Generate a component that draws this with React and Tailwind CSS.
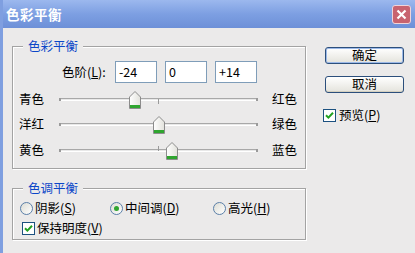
import React from 'react';

const font = { fontFamily: '"Noto Sans CJK SC", "Liberation Sans", sans-serif' };

const Key = ({ children }) => <span className="underline underline-offset-1">{children}</span>;

const Thumb = () => (
  <svg width="12" height="18" viewBox="0 0 12 18" className="block">
    <defs>
      <linearGradient id="tg" x1="0" y1="0" x2="1" y2="0">
        <stop offset="0" stopColor="#ffffff" />
        <stop offset="1" stopColor="#e2e2dc" />
      </linearGradient>
    </defs>
    <path d="M0.5 6 L6 0.5 L11.5 6 L11.5 17.5 L0.5 17.5 Z" fill="url(#tg)" stroke="#8c8c8c" />
    <rect x="1" y="14" width="10" height="3" fill="#2fa52f" />
  </svg>
);

const SliderRow = ({ left, right, value, tickUp }) => {
  const pct = 50 + value / 2;
  return (
    <div className="flex items-center h-[25px]">
      <span className="w-[47px] pl-[7px]">{left}</span>
      <div className="relative w-[199px] h-[20px]">
        <div className="absolute left-0 right-0 top-[8px] h-[3px] border-t border-[#a8a8a8] border-b border-b-white bg-[#e8e8e8]" />
        <div className="absolute left-0 top-[8px] w-[2px] h-[3px] bg-[#9a9a9a]" />
        <div className="absolute right-0 top-[8px] w-[2px] h-[3px] bg-[#9a9a9a]" />
        <div className={`absolute left-[99px] w-px h-[5px] bg-[#9a9a9a] ${tickUp ? 'top-[5px]' : 'top-[9px]'}`} />
        <div className="absolute top-[1px] -translate-x-1/2" style={{ left: `${pct}%` }}>
          <Thumb />
        </div>
      </div>
      <span className="ml-[14px]">{right}</span>
    </div>
  );
};

const Check = () => (
  <span className="w-[13px] h-[13px] border border-[#1c5180] bg-white flex items-center justify-center">
    <svg width="9" height="9" viewBox="0 0 9 9">
      <path d="M1 4.2 L3.4 6.6 L8 1.8" fill="none" stroke="#21a121" strokeWidth="2" />
    </svg>
  </span>
);

const Radio = ({ on }) => (
  <span className="w-[13px] h-[13px] rounded-full border border-[#5a7fa8] bg-gradient-to-br from-[#dcdcd4] to-white flex items-center justify-center">
    {on && <span className="w-[5px] h-[5px] rounded-full bg-[#2fa52f]" />}
  </span>
);

const Group = ({ title, className, children }) => (
  <div className={`relative border border-[#a3a3a3] shadow-[inset_1px_1px_0_#fff,1px_1px_0_#fff] ${className}`}>
    <span className="absolute left-[10px] -top-[9px] px-[5px] bg-[#ebeaea] text-[#0b47c8] leading-[16px]">{title}</span>
    {children}
  </div>
);

const Button = ({ children, primary }) => (
  <button
    className={`w-[79px] h-[17px] rounded-[3px] border border-[#2c4f7c] bg-gradient-to-b from-white to-[#e4e3dc] text-[12.5px] leading-none text-black ${primary ? 'shadow-[inset_0_0_0_1px_#9cb9e8]' : 'shadow-[inset_0_-1px_0_#d4d0c0]'}`}
  >
    {children}
  </button>
);

export default function App() {
  return (
    <div className="w-[415px] h-[253px] bg-[#ebeaea] border-l-[3px] border-[#7f9fe0] flex flex-col text-[12.5px] text-black overflow-hidden" style={font}>
      <div className="h-[28px] -ml-[3px] flex items-center justify-between pl-[6px] pr-[4px] bg-gradient-to-b from-[#9cb8ee] via-[#7d9fe2] to-[#6d90d8]">
        <span className="text-white text-[13.5px] font-bold tracking-[0.5px]">色彩平衡</span>
        <span className="w-[19px] h-[19px] rounded-[3px] border border-[#f0d4d8] bg-[#c8636f] flex items-center justify-center">
          <svg width="11" height="11" viewBox="0 0 11 11">
            <path d="M1.5 1.5 L9.5 9.5 M9.5 1.5 L1.5 9.5" stroke="#fff" strokeWidth="2.2" />
          </svg>
        </span>
      </div>

      <div className="flex pl-[9px]">
        <div className="flex flex-col pt-[18px]">
          <Group title="色彩平衡" className="w-[294px] h-[123px]">
            <div className="flex items-center pt-[14px] pl-[49px] gap-[7px]">
              <span className="w-[46px]">色阶(<Key>L</Key>):</span>
              <div className="flex gap-[8px]">
                {['-24', '0', '+14'].map((v) => (
                  <div key={v} className="w-[42px] h-[22px] border border-[#7f9db9] bg-white pl-[3px] flex items-center">{v}</div>
                ))}
              </div>
            </div>
            <div className="mt-[4px] -ml-px">
              <SliderRow left="青色" right="红色" value={-24} />
              <SliderRow left="洋红" right="绿色" value={0} />
              <div className="mt-[1px]">
                <SliderRow left="黄色" right="蓝色" value={14} tickUp />
              </div>
            </div>
          </Group>

          <Group title="色调平衡" className="w-[294px] h-[52px] mt-[19px]">
            <div className="flex items-center pt-[10px] pl-[7px]">
              <label className="flex items-center gap-[2px] w-[90px]"><Radio /><span>阴影(<Key>S</Key>)</span></label>
              <label className="flex items-center gap-[2px] w-[103px]"><Radio on /><span>中间调(<Key>D</Key>)</span></label>
              <label className="flex items-center gap-[2px]"><Radio /><span>高光(<Key>H</Key>)</span></label>
            </div>
            <div className="flex items-center gap-[2px] pl-[9px] mt-[1px]">
              <Check />
              <span>保持明度(<Key>V</Key>)</span>
            </div>
          </Group>
        </div>

        <div className="flex flex-col pl-[19px] pt-[19px]">
          <Button primary>确定</Button>
          <div className="mt-[11px]"><Button>取消</Button></div>
          <div className="flex items-center gap-[3px] mt-[12px] -ml-[2px]">
            <Check />
            <span>预览(<Key>P</Key>)</span>
          </div>
        </div>
      </div>
    </div>
  );
}
